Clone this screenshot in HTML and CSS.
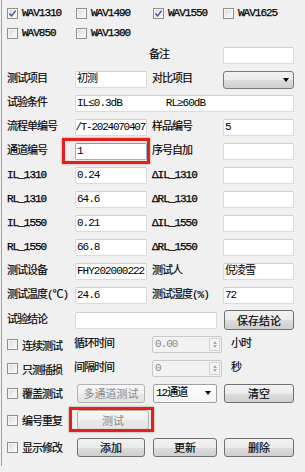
FILE: index.html
```html
<!DOCTYPE html>
<html>
<head>
<meta charset="utf-8">
<link rel="stylesheet" href="styles.css">
</head>
<body>
<div class="panel">
  <div class="row cbrow first">
    <div class="chk c1"><span class="box"><svg viewBox="0 0 9 9" width="9" height="9"><path d="M1.5 4.5 L3.6 7 L7.6 1.6" fill="none" stroke="#3a4f8f" stroke-width="1.3"/></svg></span><span class="en">WAV1310</span></div>
    <div class="chk c2 nudge"><span class="box"></span><span class="en">WAV1490</span></div>
    <div class="chk c4 nudge"><span class="box"><svg viewBox="0 0 9 9" width="9" height="9"><path d="M1.5 4.5 L3.6 7 L7.6 1.6" fill="none" stroke="#3a4f8f" stroke-width="1.3"/></svg></span><span class="en">WAV1550</span></div>
    <div class="chk c5"><span class="box"></span><span class="en">WAV1625</span></div>
  </div>
  <div class="row cbrow second">
    <div class="chk c1"><span class="box"></span><span class="en">WAV850</span></div>
    <div class="chk c2 nudge"><span class="box"></span><span class="en">WAV1300</span></div>
  </div>
  <div class="row note">
    <div class="lbl c4 back">备注</div>
    <div class="tb c5"></div>
  </div>
  <div class="row">
    <div class="lbl c1">测试项目</div>
    <div class="tb c2">初测</div>
    <div class="lbl c4">对比项目</div>
    <div class="combo c5"><span class="arrow"></span></div>
  </div>
  <div class="row">
    <div class="lbl c1">试验条件</div>
    <div class="tb wide"><span>IL≤0.3dB</span><span class="gap2">RL≥60dB</span></div>
  </div>
  <div class="row">
    <div class="lbl c1">流程单编号</div>
    <div class="tb c2 right"><span class="tight">/T-2024070407</span></div>
    <div class="lbl c4">样品编号</div>
    <div class="tb c5">5</div>
  </div>
  <div class="row">
    <div class="lbl c1">通道编号</div>
    <div class="hl hl-input c2"><div class="tb focus">1</div></div>
    <div class="lbl c4">序号自加</div>
    <div class="tb c5"></div>
  </div>
  <div class="row">
    <div class="lbl c1 en">IL_1310</div>
    <div class="tb c2">0.24</div>
    <div class="lbl c4 en">ΔIL_1310</div>
    <div class="tb c5"></div>
  </div>
  <div class="row">
    <div class="lbl c1 en">RL_1310</div>
    <div class="tb c2">64.6</div>
    <div class="lbl c4 en">ΔRL_1310</div>
    <div class="tb c5"></div>
  </div>
  <div class="row">
    <div class="lbl c1 en">IL_1550</div>
    <div class="tb c2">0.21</div>
    <div class="lbl c4 en">ΔIL_1550</div>
    <div class="tb c5"></div>
  </div>
  <div class="row">
    <div class="lbl c1 en">RL_1550</div>
    <div class="tb c2">66.8</div>
    <div class="lbl c4 en">ΔRL_1550</div>
    <div class="tb c5"></div>
  </div>
  <div class="row">
    <div class="lbl c1">测试设备</div>
    <div class="tb c2">FHY202000222</div>
    <div class="lbl c4">测试人</div>
    <div class="tb c5">倪凌雪</div>
  </div>
  <div class="row">
    <div class="lbl c1">测试温度(℃)</div>
    <div class="tb c2">24.6</div>
    <div class="lbl c4">测试湿度(%)</div>
    <div class="tb c5">72</div>
  </div>
  <div class="row tall r-concl">
    <div class="lbl c1">试验结论</div>
    <div class="tb mid"></div>
    <div class="btn c5 b5">保存结论</div>
  </div>
  <div class="row r-loop">
    <div class="chk c1"><span class="box"></span>连续测试</div>
    <div class="lbl c2 sub">循环时间</div>
    <div class="spin c4"><span class="val">0.00</span><span class="spbtn"><i class="up"></i><i class="dn"></i></span></div>
    <div class="lbl c5 unit">小时</div>
  </div>
  <div class="row r-int">
    <div class="chk c1"><span class="box"></span>只测插损</div>
    <div class="lbl c2 sub">间隔时间</div>
    <div class="spin c4"><span class="val">0</span><span class="spbtn"><i class="up"></i><i class="dn"></i></span></div>
    <div class="lbl c5 unit">秒</div>
  </div>
  <div class="row tall r-cover">
    <div class="chk c1"><span class="box"></span>覆盖测试</div>
    <div class="btn c2 b2 dis">多通道测试</div>
    <div class="dd c4">12通道<span class="arrow"></span></div>
    <div class="btn c5 b5">清空</div>
  </div>
  <div class="row tall r-dup">
    <div class="chk c1"><span class="box"></span>编号重复</div>
    <div class="hl hl-btn c2"><div class="btn b2 dis full">测试</div></div>
  </div>
  <div class="row tall r-show">
    <div class="chk c1"><span class="box"></span>显示修改</div>
    <div class="btn c2 b2">添加</div>
    <div class="btn c4 b4">更新</div>
    <div class="btn c5 b5">删除</div>
  </div>
</div>
</body>
</html>
```

FILE: styles.css
```css
* { box-sizing: border-box; }

html, body {
  margin: 0;
  padding: 0;
  background: #f0f0f0;
}

body {
  width: 305px;
  height: 472px;
  overflow: hidden;
  font-family: "Liberation Mono", "Noto Sans CJK SC", monospace;
  font-size: 11px;
  letter-spacing: -1px;
  color: #000;
}

.panel {
  margin-left: 1px;
  width: 304px;
  height: 466px;
  border-left: 1px solid #a3a3a3;
  padding-left: 5px;
  padding-top: 0.1px;
}

.row {
  display: grid;
  grid-template-columns: 68px 72px 5px 71px 71px;
  grid-template-rows: 17px;
  align-items: center;
  margin-top: 7px;
}

.row.tall { grid-template-rows: 20px; }

.cbrow { grid-template-rows: 12px; }
.cbrow.first { margin-top: 7px; }
.cbrow.second { margin-top: 8px; }
.row.note { margin-top: 8px; }

.r-concl { margin-top: 6px; }
.r-loop { margin-top: 6px; }
.r-int { margin-top: 7px; }
.r-cover { margin-top: 6px; }
.r-dup { margin-top: 7px; }
.r-show { margin-top: 7px; }

.c1 { grid-column: 1; }
.c2 { grid-column: 2; }
.c4 { grid-column: 4; }
.c5 { grid-column: 5; }
.wide { grid-column: 2 / 6; }
.mid { grid-column: 2 / 5; margin-right: 6px; }

.lbl {
  white-space: nowrap;
  line-height: 17px;
  -webkit-text-stroke: 0.15px #000;
}
.en {
  -webkit-text-stroke: 0.25px #000;
}
.lbl.back { margin-left: -3px; }
.lbl.sub { margin-left: -1px; }
.lbl.unit { margin-left: 8px; }

.chk {
  display: flex;
  align-items: center;
  gap: 4px;
  white-space: nowrap;
  height: 12px;
  -webkit-text-stroke: 0.15px #000;
}
.nudge { margin-left: 1px; }

.box {
  width: 11px;
  height: 11px;
  flex: none;
  border: 1px solid #8e8f8f;
  background: linear-gradient(135deg, #d6d6d6 0%, #eeeeee 55%, #fbfbfb 100%);
  box-shadow: inset 0 0 0 1px #f5f5f5;
  display: flex;
  align-items: center;
  justify-content: center;
  -webkit-text-stroke: 0;
}
.box svg { display: block; }

.tb {
  height: 17px;
  background: #fff;
  border: 1px solid #dadada;
  border-top-color: #cdcdcd;
  border-radius: 2px;
  padding-left: 1px;
  line-height: 15px;
  white-space: nowrap;
  overflow: hidden;
}
.tb.right {
  display: flex;
  justify-content: flex-end;
  padding-left: 0;
  padding-right: 1px;
}
.tb .tight { letter-spacing: -1.25px; }
.tb .gap2 { margin-left: 44px; }
.tb.focus {
  border-color: #8cb6df;
  border-top-color: #6a9fd6;
}

.hl { position: relative; height: 17px; }
.hl-btn { height: 20px; }
.hl::after {
  content: "";
  position: absolute;
  border: 3px solid #e51f1a;
  box-shadow: 0 0 2px rgba(90, 0, 0, 0.45), inset 0 0 1px rgba(90, 0, 0, 0.35);
  pointer-events: none;
}
.hl-input::after { left: -13px; top: -5px; right: -3px; bottom: -4px; }
.hl-btn::after { left: -6px; top: -3px; right: -7px; bottom: -2px; }

.combo {
  height: 18px;
  border: 1px solid #7a7a7a;
  border-radius: 3px;
  background: linear-gradient(#f2f2f2 0%, #ebebeb 50%, #dddddd 51%, #cfcfcf 100%);
  position: relative;
}
.arrow {
  position: absolute;
  right: 4px;
  top: 50%;
  margin-top: -2px;
  width: 0;
  height: 0;
  border-left: 3.5px solid transparent;
  border-right: 3.5px solid transparent;
  border-top: 4px solid #000;
}

.btn {
  height: 20px;
  border: 1px solid #707070;
  border-radius: 3px;
  background: linear-gradient(#f2f2f2 0%, #ebebeb 50%, #dddddd 51%, #cfcfcf 100%);
  display: flex;
  align-items: center;
  justify-content: center;
  white-space: nowrap;
  letter-spacing: 0;
  -webkit-text-stroke: 0.15px #000;
}
.btn.dis {
  border-color: #b3b3b3;
  background: linear-gradient(#f7f7f7 0%, #f0f0f0 50%, #e9e9e9 51%, #e4e4e4 100%);
  color: #8a8a8a;
  -webkit-text-stroke: 0;
}
.btn.full { width: 100%; }
.b2 { margin-left: 2px; width: 68px; }
.b4 { margin-left: 1px; width: 64px; }
.b5 { margin-left: 1px; width: 70px; }
.r-show .btn, .r-cover .btn { height: 19px; }

.spin {
  height: 17px;
  width: 70px;
  border: 1px solid #c9c9c9;
  border-radius: 2px;
  background: #f2f2f2;
  display: flex;
  align-items: stretch;
  color: #8a8a8a;
}
.spin .val {
  flex: 1;
  padding-left: 2px;
  line-height: 15px;
}
.spbtn {
  width: 11px;
  margin: 1px 1px 1px 0;
  border: 1px solid #d3d3d3;
  background: #f4f4f4;
  display: flex;
  flex-direction: column;
  align-items: center;
  justify-content: space-evenly;
}
.spbtn i {
  display: block;
  width: 0;
  height: 0;
  border-left: 2.5px solid transparent;
  border-right: 2.5px solid transparent;
}
.spbtn .up { border-bottom: 3px solid #a9a9a9; }
.spbtn .dn { border-top: 3px solid #a9a9a9; }

.dd {
  height: 19px;
  width: 64px;
  margin-left: 1px;
  border: 1px solid #9f9f9f;
  border-radius: 2px;
  background: linear-gradient(#ffffff, #f4f4f4);
  position: relative;
  padding-left: 2px;
  line-height: 17px;
  white-space: nowrap;
  -webkit-text-stroke: 0.15px #000;
}
.dd .arrow { right: 5px; }
```
